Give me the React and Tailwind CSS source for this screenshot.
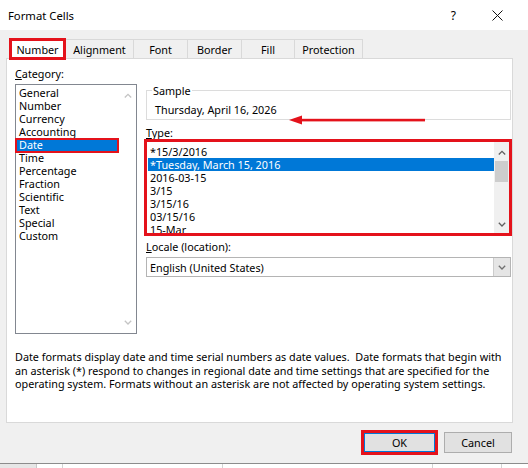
import React from "react";

const RED = "#e4121b";

function Chev({ dir = "up", color = "#606060" }) {
  const pts = dir === "up" ? "0.8,4.5 4,1.3 7.2,4.5" : "0.8,0.8 4,4 7.2,0.8";
  return (
    <svg width="8" height="5" viewBox="0 0 8 5">
      <polyline points={pts} fill="none" stroke={color} strokeWidth="1.3" />
    </svg>
  );
}

const categories = [
  "General",
  "Number",
  "Currency",
  "Accounting",
  "Date",
  "Time",
  "Percentage",
  "Fraction",
  "Scientific",
  "Text",
  "Special",
  "Custom",
];

const types = [
  "*15/3/2016",
  "*Tuesday, March 15, 2016",
  "2016-03-15",
  "3/15",
  "3/15/16",
  "03/15/16",
  "15-Mar",
];

function Tab({ label, w }) {
  return (
    <div
      className={`h-[19px] border-t border-r border-[#d9d9d9] bg-[#f0f0f0] flex items-center justify-center ${w}`}
    >
      {label}
    </div>
  );
}

export default function App() {
  return (
    <div className="relative w-[528px] h-[468px] bg-[#f0f0f0] overflow-hidden flex flex-col font-['Noto_Sans',sans-serif] text-[10.8px] leading-[13px] text-black">
      {/* Title bar */}
      <div className="h-[30px] shrink-0 bg-white flex items-center pl-[8px]">
        <span className="text-[11.3px]">Format Cells</span>
        <span className="ml-auto text-[12px] mr-[36px]">?</span>
        <svg width="11" height="11" viewBox="0 0 11 11" className="mr-[25px]">
          <path d="M0.5 0.5 L10.5 10.5 M10.5 0.5 L0.5 10.5" stroke="#111" strokeWidth="1" />
        </svg>
      </div>

      {/* Tabs */}
      <div className="h-[28px] shrink-0 flex items-start pt-[9px] pl-[9px]">
        <div
          className="relative z-10 -mt-[1px] h-[22px] w-[57px] bg-white flex items-center justify-center border-[3px]"
          style={{ borderColor: RED }}
        >
          Number
        </div>
        <div className="h-[19px] w-[68px] border-t border-r border-[#d9d9d9] bg-[#f0f0f0] flex items-center justify-center">
          Alignment
        </div>
        <Tab label="Font" w="w-[54px]" />
        <Tab label="Border" w="w-[54px]" />
        <Tab label="Fill" w="w-[53px]" />
        <Tab label="Protection" w="w-[68px]" />
      </div>

      {/* Main area */}
      <div className="flex-1 flex flex-col min-h-0">
        <div className="ml-[6px] w-[507px] h-[365px] shrink-0 bg-white border border-[#d9d9d9] pt-[8px] pl-[8px]">
          <div className="flex gap-[9px]">
            {/* Left column */}
            <div className="w-[122px] flex flex-col">
              <div className="h-[17px]">
                <span className="underline underline-offset-[1px]">C</span>ategory:
              </div>
              <div className="h-[250px] border border-[#828790] flex">
                <div className="w-[103px] pt-[1.5px] flex flex-col leading-[12px]">
                  {categories.map((c) =>
                    c === "Date" ? (
                      <div
                        key={c}
                        className="relative h-[13px] w-[102px] bg-[#0078d7] text-white pl-[3px] flex items-center outline-2 -outline-offset-1"
                        style={{ outlineColor: RED, outlineStyle: "solid" }}
                      >
                        {c}
                      </div>
                    ) : (
                      <div key={c} className="h-[13px] pl-[3px] flex items-center">
                        {c}
                      </div>
                    )
                  )}
                </div>
                <div className="flex-1 flex flex-col justify-between items-center py-[8px]">
                  <Chev dir="up" color="#c4c4c4" />
                  <Chev dir="down" color="#c4c4c4" />
                </div>
              </div>
            </div>

            {/* Right column */}
            <div className="w-[366px] flex flex-col">
              <fieldset className="relative mt-[17px] w-[365px] border border-[#dcdcdc] pl-[8px] pt-[6px] pb-[3px]">
                <legend className="-ml-[3px] px-[1px] leading-[13px]">Sample</legend>
                <div className="h-[13px] flex items-center">Thursday, April 16, 2026</div>
                {/* red annotation arrow */}
                <svg
                  className="absolute left-[142px] top-[17px]"
                  width="136"
                  height="12"
                  viewBox="0 0 136 12"
                >
                  <polygon points="0,6 13,1.5 13,10.5" fill={RED} />
                  <rect x="12" y="4.8" width="124" height="2.6" fill={RED} />
                </svg>
              </fieldset>

              <div className="mt-[6px] h-[13px]">
                <span className="underline underline-offset-[1px]">T</span>ype:
              </div>

              <div
                className="mt-[0px] h-[97px] w-[368px] -ml-[2px] border-[3px] flex overflow-hidden bg-white"
                style={{ borderColor: RED }}
              >
                <div className="w-[347px] pt-[3px] pl-[1px] flex flex-col leading-[12px]">
                  {types.map((t, i) =>
                    i === 1 ? (
                      <div key={t} className="h-[13px] shrink-0 bg-[#0078d7] text-white pl-[2px] flex items-center">
                        {t}
                      </div>
                    ) : (
                      <div key={t} className="h-[13px] shrink-0 pl-[2px] flex items-center">
                        {t}
                      </div>
                    )
                  )}
                </div>
                <div className="flex-1 bg-[#f0f0f0] flex flex-col items-center">
                  <div className="h-[17px] w-full flex items-center justify-center pt-[3px]">
                    <Chev dir="up" />
                  </div>
                  <div className="mt-[2px] h-[21px] w-[13px] bg-[#cdcdcd]" />
                  <div className="mt-auto h-[17px] w-full flex items-center justify-center">
                    <Chev dir="down" />
                  </div>
                </div>
              </div>

              <div className="mt-[4px] h-[13px]">
                <span className="underline underline-offset-[1px]">L</span>ocale (location):
              </div>

              <div className="mt-[4px] h-[20px] w-[365px] border border-[#b4b4b4] flex items-stretch bg-white">
                <div className="flex-1 pl-[3px] flex items-center">English (United States)</div>
                <div className="w-[17px] bg-[#e5e5e5] border-l border-[#cccccc] flex items-center justify-center">
                  <Chev dir="down" color="#707070" />
                </div>
              </div>
            </div>
          </div>

          {/* Description */}
          <div className="mt-[16px] leading-[13.5px] whitespace-pre">
            <div>Date formats display date and time serial numbers as date values.  Date formats that begin with</div>
            <div>an asterisk (*) respond to changes in regional date and time settings that are specified for the</div>
            <div>operating system. Formats without an asterisk are not affected by operating system settings.</div>
          </div>
        </div>

        {/* Buttons */}
        <div className="h-[40px] shrink-0 flex items-start justify-end pt-[7px] pr-[16px]">
          <div className="w-[77px] h-[25px] border-[3px]" style={{ borderColor: RED }}>
            <div className="w-full h-full bg-[#e1e1e1] border border-[#0078d7] flex items-center justify-center">
              OK
            </div>
          </div>
          <div className="ml-[6px] mt-[2px] w-[68px] h-[21px] bg-[#e1e1e1] border border-[#adadad] flex items-center justify-center">
            Cancel
          </div>
        </div>

        {/* Sheet behind */}
        <div className="flex-1 border-t border-[#8c8c8c] bg-white flex">
          <div className="w-[37px] bg-[#e6e6e6] border-r border-[#c8c8c8]" />
          <div className="w-[26px] border-r border-[#d4d4d4]" />
          <div className="w-[160px] border-r border-[#d4d4d4]" />
          <div className="w-[210px] border-r border-[#d4d4d4]" />
          <div className="w-[69px] border-r border-[#d4d4d4]" />
        </div>
      </div>
    </div>
  );
}
